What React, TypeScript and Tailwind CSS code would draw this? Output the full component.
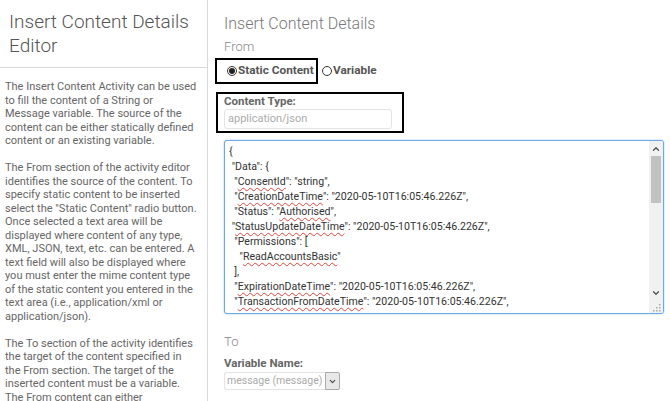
import { ChevronDown, ChevronUp } from "lucide-react";

const helpText: string[][] = [
  [
    "The Insert Content Activity can be used",
    "to fill the content of a String or",
    "Message variable. The source of the",
    "content can be either statically defined",
    "content or an existing variable.",
  ],
  [
    "The From section of the activity editor",
    "identifies the source of the content. To",
    "specify static content to be inserted",
    'select the "Static Content" radio button.',
    "Once selected a text area will be",
    "displayed where content of any type,",
    "XML, JSON, text, etc. can be entered. A",
    "text field will also be displayed where",
    "you must enter the mime content type",
    "of the static content you entered in the",
    "text area (i.e., application/xml or",
    "application/json).",
  ],
  [
    "The To section of the activity identifies",
    "the target of the content specified in",
    "the From section. The target of the",
    "inserted content must be a variable.",
    "The From content can either",
  ],
];

function Sq({ children }: { children: React.ReactNode }) {
  // spellcheck squiggle like the browser draws it
  return (
    <span className="underline decoration-wavy decoration-[#e0443c] decoration-1 underline-offset-[2px]">
      {children}
    </span>
  );
}

function JsonBox() {
  const lines: React.ReactNode[] = [
    <>{"{"}</>,
    <>&nbsp;"Data": {"{"}</>,
    <>&nbsp;&nbsp;"<Sq>ConsentId</Sq>": "string",</>,
    <>&nbsp;&nbsp;"<Sq>CreationDateTime</Sq>": "2020-05-10T16:05:46.226Z",</>,
    <>&nbsp;&nbsp;"Status": "<Sq>Authorised</Sq>",</>,
    <>&nbsp;"<Sq>StatusUpdateDateTime</Sq>": "2020-05-10T16:05:46.226Z",</>,
    <>&nbsp;&nbsp;"Permissions": [</>,
    <>&nbsp;&nbsp;&nbsp;&nbsp;"<Sq>ReadAccountsBasic</Sq>"</>,
    <>&nbsp;&nbsp;],</>,
    <>&nbsp;&nbsp;"<Sq>ExpirationDateTime</Sq>": "2020-05-10T16:05:46.226Z",</>,
    <>&nbsp;&nbsp;"<Sq>TransactionFromDateTime</Sq>": "2020-05-10T16:05:46.226Z",</>,
  ];

  return (
    <div className="relative w-[440px] h-[174px] rounded-[3px] border border-[#6aa8e8] shadow-[0_0_2px_#9cc7f2] bg-white overflow-hidden">
      <div className="pl-[4px] pt-[3px] pr-[20px] text-[10.6px] leading-[15px] text-[#333] whitespace-nowrap">
        {lines.map((l, i) => (
          <div key={i}>{l}</div>
        ))}
      </div>

      {/* Scrollbar */}
      <div className="absolute right-0 top-0 bottom-[14px] w-[14px] bg-[#f1f1f1] flex flex-col items-center">
        <ChevronUp className="w-[10px] h-[10px] mt-[3px] text-[#505050]" strokeWidth={3} />
        <div className="w-[10px] h-[47px] mt-[2px] bg-[#c1c1c1]" />
        <div className="flex-1" />
        <ChevronDown className="w-[10px] h-[10px] mb-[1px] text-[#505050]" strokeWidth={3} />
      </div>
      <div className="absolute right-0 bottom-0 w-[14px] h-[14px] bg-[#f1f1f1]">
        <svg viewBox="0 0 14 14" className="w-full h-full">
          <g fill="#aaa">
            <rect x="10" y="5" width="1.5" height="1.5" />
            <rect x="7" y="8" width="1.5" height="1.5" />
            <rect x="10" y="8" width="1.5" height="1.5" />
            <rect x="4" y="11" width="1.5" height="1.5" />
            <rect x="7" y="11" width="1.5" height="1.5" />
            <rect x="10" y="11" width="1.5" height="1.5" />
          </g>
        </svg>
      </div>
    </div>
  );
}

function Radio({ checked }: { checked?: boolean }) {
  return (
    <span className="w-[10px] h-[10px] rounded-full border border-[#333] flex items-center justify-center bg-white shrink-0">
      {checked && <span className="w-[6px] h-[6px] rounded-full bg-[#222]" />}
    </span>
  );
}

export default function App() {
  return (
    <div className="flex w-[670px] h-[401px] overflow-hidden bg-white font-['Roboto',sans-serif]">
      {/* Help panel */}
      <aside className="w-[208px] shrink-0 border-r border-[#d9d9d9] flex flex-col">
        <div className="px-[9px] pt-[10px] pb-[9px] border-b border-[#d9d9d9] text-[19px] leading-[24px] font-light text-[#555]">
          Insert Content Details Editor
        </div>
        <div className="pl-[5px] pt-[12px] text-[11px] leading-[13.5px] text-[#666] space-y-[13.5px]">
          {helpText.map((para, i) => (
            <p key={i}>
              {para.map((line, j) => (
                <span key={j} className="block whitespace-nowrap">
                  {line}
                </span>
              ))}
            </p>
          ))}
        </div>
      </aside>

      {/* Editor */}
      <main className="flex-1 pl-[16px] pt-[14px] flex flex-col">
        <h1 className="text-[16px] leading-[20px] font-light text-[#777]">Insert Content Details</h1>
        <div className="mt-[5px] text-[13px] leading-[16px] font-light text-[#888]">From</div>

        <div className="mt-[3px] -ml-[9px] flex items-center">
          <div className="h-[26px] w-[103px] border-2 border-black flex items-center gap-[1px] pl-[10px]">
            <Radio checked />
            <span className="text-[11.8px] font-bold text-[#555] whitespace-nowrap">Static Content</span>
          </div>
          <div className="flex items-center gap-[1px] ml-[4px]">
            <Radio />
            <span className="text-[11.8px] font-bold text-[#555]">Variable</span>
          </div>
        </div>

        <div className="mt-[8px] -ml-[8px] w-[188px] h-[41px] border-2 border-black pl-[6px] pt-[1px]">
          <div className="text-[11.5px] leading-[13px] font-bold text-[#666]">Content Type:</div>
          <div className="mt-[1px] w-[168px] h-[20px] rounded-[3px] border border-[#e3e3e3] px-[3px] flex items-center text-[11px] text-[#aaa]">
            application/json
          </div>
        </div>

        <div className="mt-[7px]">
          <JsonBox />
        </div>

        <div className="mt-[20px] text-[13px] leading-[16px] font-light text-[#888]">To</div>
        <div className="mt-[7px] text-[11.5px] leading-[13px] font-bold text-[#666]">Variable Name:</div>
        <div className="mt-[2px] flex items-center">
          <div className="h-[18px] w-[101px] rounded-l-[3px] border border-[#e3e3e3] border-r-0 px-[2px] flex items-center text-[10.5px] text-[#aaa] whitespace-nowrap">
            message (message)
          </div>
          <div className="h-[18px] w-[15px] border border-[#aaa] rounded-r-[2px] bg-[#e8e8e8] flex items-center justify-center">
            <ChevronDown className="w-[9px] h-[9px] text-[#444]" strokeWidth={3} />
          </div>
        </div>
      </main>
    </div>
  );
}
